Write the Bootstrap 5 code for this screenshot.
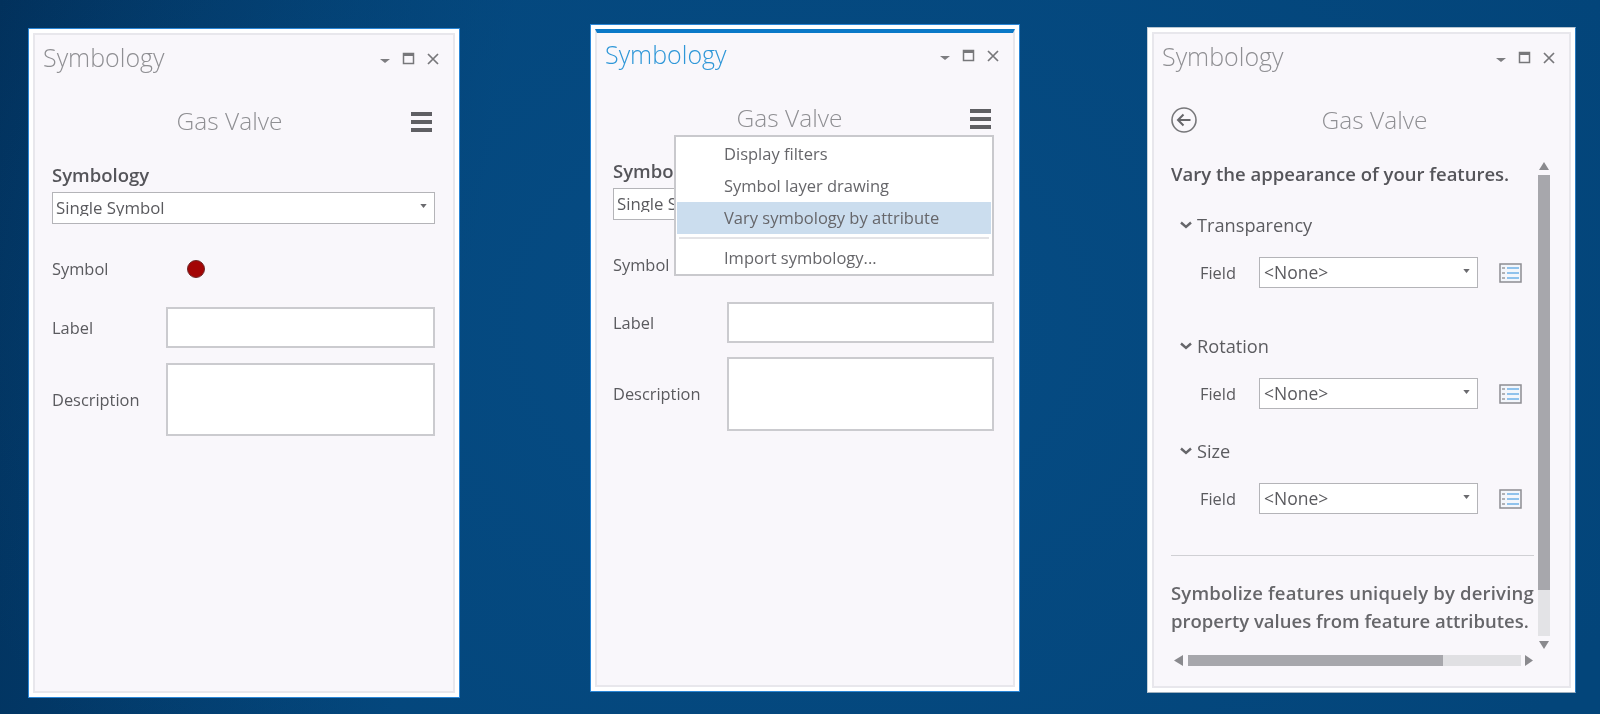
<!DOCTYPE html>
<html lang="en">
<head>
<meta charset="utf-8">
<title>Symbology</title>
<link href="https://cdn.jsdelivr.net/npm/bootstrap@5.3.0/dist/css/bootstrap.min.css" rel="stylesheet">
<style>
html,body{height:714px;overflow:hidden}
body{font-family:"Open Sans","Liberation Sans",sans-serif;color:#5a5a5e;font-size:16px;
 background:radial-gradient(ellipse 900px 700px at 50% 45%,#064c84 0%,rgba(6,76,132,0) 100%),linear-gradient(100deg,#02315c 0%,#03457a 30%,#03457a 100%)}
.stage{height:714px}
.pane{flex:none;border:1px solid #2a86d6;padding:4px;background:#fff;filter:blur(.35px)}
.pane-in{height:100%;border:2px solid #e8e7ec;background:#f9f7fb}
.pane-a{margin-left:28px;margin-top:28px;width:432px;height:670px}
.pane-b{margin-left:130px;margin-top:24px;width:430px;height:668px}
.pane-c{margin-left:127px;margin-top:27px;width:429px;height:666px;border-color:#b8c6d2 #2a7cc0 #9fb0be #c4d0da}
.pane-b .pane-in{border-top:4px solid #0b79c8}
.head{height:50px;padding-left:8px;padding-right:11px}
.pane-b .head{height:48px}
.ttl{font-size:25px;font-weight:300;color:#8f8f93;line-height:1;margin-top:-5px}
.pane-b .ttl{color:#2f97d8}
.ctl{margin-top:-2px}
.body-a{padding-left:17px;padding-right:18px}
.pane-b .body-a{padding-left:16px;padding-right:19px}
.body-c{padding-left:17px;padding-right:17px}
.gas{height:40px;margin-top:16px}
.pane-b .gas{margin-top:17px}
.gas-t{font-size:24.5px;font-weight:300;color:#8f8f93;line-height:1;flex:1 1 auto;text-align:center}
.burger{flex:none;width:28px;display:flex;justify-content:flex-start;padding-left:4px;padding-top:1px}
.hd{font-size:18.5px;font-weight:600;line-height:24px;color:#55555a}
.mt-h{margin-top:22px}
.pane-b .mt-h{margin-top:21px}
.form-select.pick{border-radius:0;border:1.5px solid #b4b4b8;box-shadow:none;height:32px;padding:0 20px 0 3px;font-size:16.8px;color:#5a5a5e;background-color:#fff;background-image:url("data:image/svg+xml,%3csvg xmlns='http://www.w3.org/2000/svg' viewBox='0 0 8 5'%3e%3cpath fill='%236a6a6e' d='M0 0h8L4 5z'/%3e%3c/svg%3e");background-size:7px 4px;background-position:right 7px top 11px;font-family:inherit;line-height:1}
.mt-5px{margin-top:5px}
.lab{width:114px;flex:none;font-size:16.4px;line-height:24px}
.row-sym{margin-top:33px;height:24px}
.dot{width:18px;height:18px;border-radius:50%;background:#a30505;border:1px solid #6f2a2a;margin-left:21px}
.form-control.inp{border-radius:0;border:2px solid #cbcbcf;background:#fff;box-shadow:none;padding:0;resize:none}
.r-lab{margin-top:26px}
.pane-b .r-lab{margin-top:25px}
.r-desc{margin-top:15px}
.pane-b .r-desc{margin-top:14px}
.h41{height:41px}.h73{height:73px;min-height:73px}
.pane-b .h73{height:74px}
.scrollv{width:12px;flex:none;margin-left:4px;height:490px}
.bodyrow{margin-top:20px;height:490px}
.scol{width:363px;flex:none}
.sec{height:24px;padding-left:9px;gap:5px;font-size:18.2px;font-weight:500;line-height:24px;color:#5c5c60}
.fld{padding-left:29px}
.fld-l{width:59px;flex:none;line-height:24px;font-size:16.4px}
.fld .form-select.pick{width:219px;flex:none;height:31px;font-size:17.5px;padding-left:4px}
.tbl{margin-left:21px;flex:none}
.vthumb{height:415px;background:#a7a7ac;margin-top:3px}
.vtrack{height:46px;background:#e3e3e6}
.rule{margin-top:41px;height:1px;background:#d0d0d4}
.para{margin-top:23px;font-size:18.5px;font-weight:600;line-height:28px;color:#66666a;white-space:nowrap}
.wide{letter-spacing:.18px}
.hsb{height:11px;margin-top:5px;width:362px;margin-left:2px}
.htrack{width:333px;height:11px;background:#e0e0e3;margin:0 3px 0 4px;flex:none}
.hthumb{width:255px;height:11px;background:#a7a7ac}
.dropdown-menu.fly{display:block;top:37px;right:0;left:auto;width:320px;border:2px solid #c9c9cd;border-radius:0;padding:1px;margin:0;min-width:0;background:#fff}
.fly .dropdown-item{padding:0 0 0 47px;height:32px;line-height:32px;font-size:16.5px;color:#66666a}
.fly .dropdown-item.active{background:#cbddee;color:#66666a}
.fly .dropdown-divider{margin:3px 2px 4px;border-top:2px solid #e3e3e6;opacity:1}
.fly .last{height:30px;line-height:30px}
</style>
</head>
<body>
<div class="stage d-flex align-items-start">

<section class="pane pane-a">
 <div class="pane-in">
  <div class="head d-flex align-items-center justify-content-between">
   <span class="ttl">Symbology</span>
   <svg class="ctl" width="62" height="16" viewBox="0 0 62 16"><path d="M0 8h10l-5 4z" fill="#7d7d80"/><rect x="23.5" y="2.5" width="10" height="10" fill="none" stroke="#77777a" stroke-width="1.5"/><rect x="23" y="2" width="11" height="3" fill="#77777a"/><path d="M48 3l10 10M58 3L48 13" stroke="#77777a" stroke-width="1.7"/></svg>
  </div>
  <div class="body-a">
   <div class="gas d-flex align-items-center">
    <span class="gas-t">Gas Valve</span>
    <span class="burger"><svg width="21" height="20" viewBox="0 0 21 20"><path d="M0 0h21v4H0zM0 8h21v4H0zM0 16h21v4H0z" fill="#5f5f63"/></svg></span>
   </div>
   <div class="hd mt-h">Symbology</div>
   <select class="form-select pick mt-5px"><option>Single Symbol</option></select>
   <div class="row-sym d-flex align-items-center"><span class="lab">Symbol</span><span class="dot"></span></div>
   <div class="r-lab d-flex align-items-center"><span class="lab">Label</span><input class="form-control inp h41" type="text"></div>
   <div class="r-desc d-flex align-items-center"><span class="lab">Description</span><textarea class="form-control inp h73"></textarea></div>
  </div>
 </div>
</section>

<section class="pane pane-b">
 <div class="pane-in">
  <div class="head d-flex align-items-center justify-content-between">
   <span class="ttl">Symbology</span>
   <svg class="ctl" width="62" height="16" viewBox="0 0 62 16"><path d="M0 8h10l-5 4z" fill="#7d7d80"/><rect x="23.5" y="2.5" width="10" height="10" fill="none" stroke="#77777a" stroke-width="1.5"/><rect x="23" y="2" width="11" height="3" fill="#77777a"/><path d="M48 3l10 10M58 3L48 13" stroke="#77777a" stroke-width="1.7"/></svg>
  </div>
  <div class="body-a">
   <div class="gas d-flex align-items-center position-relative">
    <span class="gas-t">Gas Valve</span>
    <span class="burger"><svg width="21" height="20" viewBox="0 0 21 20"><path d="M0 0h21v4H0zM0 8h21v4H0zM0 16h21v4H0z" fill="#5f5f63"/></svg></span>
    <div class="dropdown-menu fly">
     <a class="dropdown-item" href="#">Display filters</a>
     <a class="dropdown-item" href="#">Symbol layer drawing</a>
     <a class="dropdown-item active" href="#">Vary symbology by attribute</a>
     <hr class="dropdown-divider">
     <a class="dropdown-item last" href="#">Import symbology...</a>
    </div>
   </div>
   <div class="hd mt-h">Symbology</div>
   <select class="form-select pick mt-5px"><option>Single Symbol</option></select>
   <div class="row-sym d-flex align-items-center"><span class="lab">Symbol</span><span class="dot"></span></div>
   <div class="r-lab d-flex align-items-center"><span class="lab">Label</span><input class="form-control inp h41" type="text"></div>
   <div class="r-desc d-flex align-items-center"><span class="lab">Description</span><textarea class="form-control inp h73"></textarea></div>
  </div>
 </div>
</section>

<section class="pane pane-c">
 <div class="pane-in">
  <div class="head d-flex align-items-center justify-content-between">
   <span class="ttl">Symbology</span>
   <svg class="ctl" width="62" height="16" viewBox="0 0 62 16"><path d="M0 8h10l-5 4z" fill="#7d7d80"/><rect x="23.5" y="2.5" width="10" height="10" fill="none" stroke="#77777a" stroke-width="1.5"/><rect x="23" y="2" width="11" height="3" fill="#77777a"/><path d="M48 3l10 10M58 3L48 13" stroke="#77777a" stroke-width="1.7"/></svg>
  </div>
  <div class="body-c">
   <div class="gas d-flex align-items-center">
    <svg class="flex-none" width="26" height="26" viewBox="0 0 26 26"><circle cx="13" cy="13" r="12" fill="none" stroke="#77777a" stroke-width="1.6"/><path d="M19.5 13H7.5M12.5 7.5L7 13l5.5 5.5" fill="none" stroke="#66666a" stroke-width="2"/></svg>
    <span class="gas-t">Gas Valve</span>
   </div>
   <div class="bodyrow d-flex">
    <div class="scol">
     <div class="hd" style="margin-top:2px">Vary the appearance of your features.</div>
     <div class="sec d-flex align-items-center" style="margin-top:27px"><svg width="12" height="8" viewBox="0 0 12 8"><path d="M1 1.5l5 4.5 5-4.5" fill="none" stroke="#66666a" stroke-width="2.4"/></svg>Transparency</div>
     <div class="fld d-flex align-items-center" style="margin-top:20px"><span class="fld-l">Field</span><select class="form-select pick"><option>&lt;None&gt;</option></select><svg class="tbl" width="23" height="20" viewBox="0 0 23 20"><rect x="1" y="1" width="21" height="18" fill="#f3f6fb" stroke="#8d8d92" stroke-width="1.5"/><path d="M8 5h12M8 10h12M8 15h12" stroke="#8fc2ec" stroke-width="2"/><path d="M3 5h3M3 10h3M3 15h3" stroke="#9a9a9e" stroke-width="1.5"/></svg></div>
     <div class="sec d-flex align-items-center" style="margin-top:46px"><svg width="12" height="8" viewBox="0 0 12 8"><path d="M1 1.5l5 4.5 5-4.5" fill="none" stroke="#66666a" stroke-width="2.4"/></svg>Rotation</div>
     <div class="fld d-flex align-items-center" style="margin-top:20px"><span class="fld-l">Field</span><select class="form-select pick"><option>&lt;None&gt;</option></select><svg class="tbl" width="23" height="20" viewBox="0 0 23 20"><rect x="1" y="1" width="21" height="18" fill="#f3f6fb" stroke="#8d8d92" stroke-width="1.5"/><path d="M8 5h12M8 10h12M8 15h12" stroke="#8fc2ec" stroke-width="2"/><path d="M3 5h3M3 10h3M3 15h3" stroke="#9a9a9e" stroke-width="1.5"/></svg></div>
     <div class="sec d-flex align-items-center" style="margin-top:30px"><svg width="12" height="8" viewBox="0 0 12 8"><path d="M1 1.5l5 4.5 5-4.5" fill="none" stroke="#66666a" stroke-width="2.4"/></svg>Size</div>
     <div class="fld d-flex align-items-center" style="margin-top:20px"><span class="fld-l">Field</span><select class="form-select pick"><option>&lt;None&gt;</option></select><svg class="tbl" width="23" height="20" viewBox="0 0 23 20"><rect x="1" y="1" width="21" height="18" fill="#f3f6fb" stroke="#8d8d92" stroke-width="1.5"/><path d="M8 5h12M8 10h12M8 15h12" stroke="#8fc2ec" stroke-width="2"/><path d="M3 5h3M3 10h3M3 15h3" stroke="#9a9a9e" stroke-width="1.5"/></svg></div>
     <div class="rule"></div>
     <div class="para"><span class="wide">Symbolize features uniquely by deriving</span><br>property values from feature attributes.</div>
    </div>
    <div class="scrollv d-flex flex-column">
     <svg class="d-block" width="12" height="12" viewBox="0 0 12 12"><path d="M1 10h10L6 2z" fill="#8a8a8e"/></svg>
     <div class="vthumb"></div>
     <div class="vtrack"></div>
     <svg class="d-block mt-1" width="12" height="10" viewBox="0 0 12 10"><path d="M1 1h10L6 9z" fill="#8a8a8e"/></svg>
    </div>
   </div>
   <div class="hsb d-flex align-items-center">
    <svg class="flex-none" width="11" height="11" viewBox="0 0 11 11"><path d="M10 0v11L1 5.5z" fill="#8a8a8e"/></svg>
    <div class="htrack"><div class="hthumb"></div></div>
    <svg class="flex-none" width="10" height="11" viewBox="0 0 10 11"><path d="M1 0v11l8-5.5z" fill="#8a8a8e"/></svg>
   </div>
  </div>
 </div>
</section>

</div>
<script src="https://cdn.jsdelivr.net/npm/bootstrap@5.3.0/dist/js/bootstrap.bundle.min.js"></script>
</body>
</html>
